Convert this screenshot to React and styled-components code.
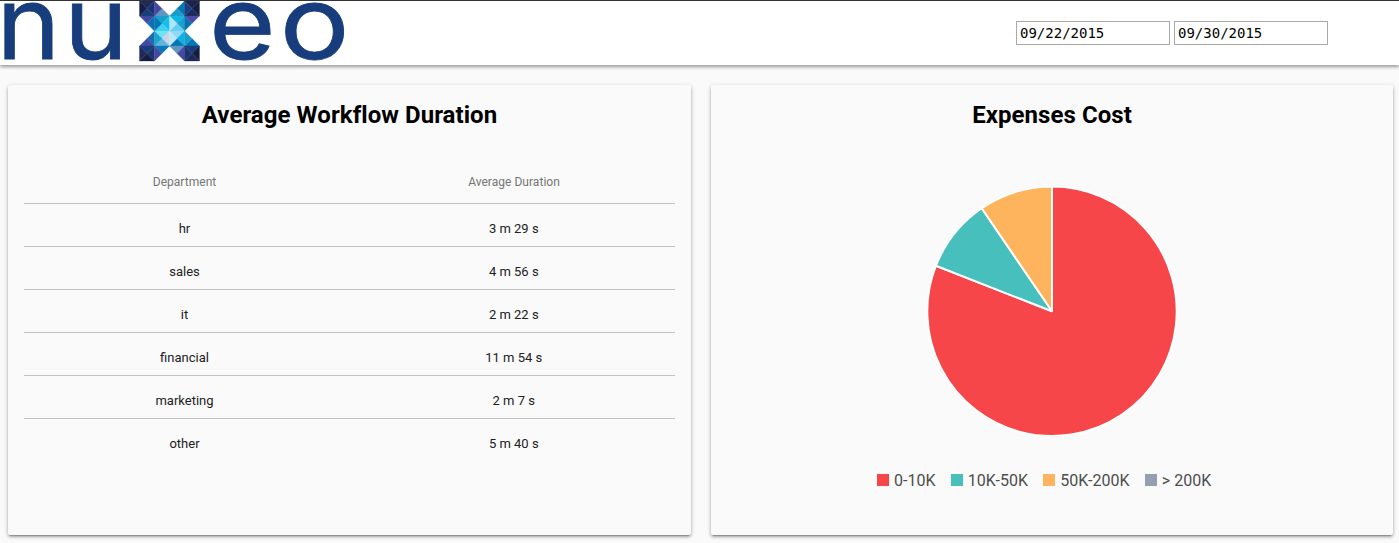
import React from "react";
import styled, { createGlobalStyle } from "styled-components";

const GlobalStyle = createGlobalStyle`
  * { box-sizing: border-box; }
  html, body { height: 100%; overflow: hidden; }
  body { margin: 0; background: #fafafa; font-family: Roboto, "Liberation Sans", sans-serif; color: #000; }
`;

const Page = styled.div`
  height: 543px;
  display: flex;
  flex-direction: column;
`;

const Header = styled.header`
  height: 65px;
  flex: none;
  display: flex;
  justify-content: space-between;
  background: #fff;
  border-top: 1px solid #333;
  box-shadow: 0 2px 3px rgba(0, 0, 0, 0.28), 0 1px 5px rgba(0, 0, 0, 0.18);
`;

const LogoSvg = styled.svg`
  display: block;
  width: 350px;
  height: 64px;
  overflow: visible;
  font-family: Inter, sans-serif;
  font-size: 103px;
  fill: #173d7c;
`;

const Dates = styled.div`
  display: flex;
  gap: 4px;
  padding: 20px 71px 0 0;
`;

const DateField = styled.input`
  width: 154px;
  height: 24px;
  padding: 1px 3px;
  border: 1px solid #a9a9a9;
  border-radius: 0;
  background: #fff;
  color: #000;
  font: 14px "DejaVu Sans Mono", monospace;
`;

const Cards = styled.main`
  display: grid;
  grid-template-columns: 683px 682px;
  gap: 20px;
  padding: 20px 0 0 8px;
`;

const Card = styled.section`
  height: 450px;
  padding: 16px;
  border-radius: 2px;
  background: #fafafa;
  display: flex;
  flex-direction: column;
  box-shadow: 0 2px 3px rgba(0, 0, 0, 0.24), 0 1px 5px rgba(0, 0, 0, 0.16), 0 3px 1px -2px rgba(0, 0, 0, 0.2);
`;

const Title = styled.h2`
  margin: 0;
  font-size: 24px;
  font-weight: 700;
  line-height: 28px;
  letter-spacing: 0.06px;
  text-align: center;
`;

const Table = styled.table`
  width: 100%;
  margin-top: 31px;
  border-collapse: collapse;
  table-layout: fixed;
  text-align: center;
`;

const HeadCell = styled.th`
  height: 43px;
  padding: 2px 0 0;
  font-size: 12px;
  font-weight: 400;
  letter-spacing: 0.03px;
  color: #757575;
  &:first-child { width: 321px; }
  &:last-child { padding-left: 8px; }
`;

const Row = styled.tr`
  border-top: 1px solid #c2c2c2;
`;

const Cell = styled.td`
  height: 43px;
  padding: 7px 0 0;
  font-size: 13px;
  color: #212121;
  &:last-child { padding-left: 7.5px; }
`;

const Pie = styled.svg`
  display: block;
  width: 250px;
  height: 250px;
  margin: 57px auto 0;
  stroke: #fff;
  stroke-width: 2;
  stroke-linejoin: bevel;
`;

const Legend = styled.div`
  display: flex;
  justify-content: center;
  gap: 15px;
  margin: 35px 16px 0 0;
`;

const LegendItem = styled.div`
  display: flex;
  align-items: center;
  gap: 5.3px;
  font-size: 16px;
  line-height: 20px;
  letter-spacing: 0.03px;
  color: #4d4d4d;
  &::before {
    content: "";
    width: 12px;
    height: 12px;
    margin-bottom: 2px;
    background: ${(p) => p.$color};
  }
`;

const durations = [
  ["hr", "3 m 29 s"],
  ["sales", "4 m 56 s"],
  ["it", "2 m 22 s"],
  ["financial", "11 m 54 s"],
  ["marketing", "2 m 7 s"],
  ["other", "5 m 40 s"],
];

const costs = [
  { label: "0-10K", color: "#f7464a", count: 17 },
  { label: "10K-50K", color: "#46bfbd", count: 2 },
  { label: "50K-200K", color: "#fdb45c", count: 2 },
  { label: "> 200K", color: "#949fb1", count: 0 },
];

const total = costs.reduce((sum, c) => sum + c.count, 0);

function slices() {
  let from = 0;
  const point = (n) => {
    const a = (n / total) * 2 * Math.PI;
    return `${125 + 124.7 * Math.sin(a)} ${125.3 - 124.7 * Math.cos(a)}`;
  };
  return costs.filter((c) => c.count).map((c) => {
    const to = from + c.count;
    const large = c.count / total > 0.5 ? 1 : 0;
    const d = `M125 125.3L${point(from)}A124.7 124.7 0 ${large} 1 ${point(to)}Z`;
    from = to;
    return <path key={c.label} d={d} fill={c.color} />;
  });
}

// Mosaic cells: column, row, then the top, right, bottom and left facets.
const mosaic = [
  [0, 0, "#1f2857", "#1b3270", "#173d7c", "#141d45"],
  [1, 0, null, null, "#5f97c0", "#4548a0"],
  [2, 0, null, "#0476b0", "#1a9cc8", null],
  [3, 0, "#1a2350", "#141d42", "#1f2a5c", "#163e80"],
  [0, 1, "#4548a0", "#0a70b0", null, null],
  [1, 1, "#1a9fc9", "#0fc0f2", "#3fd0f0", "#0478b5"],
  [2, 1, "#10b8e8", "#1aa0cc", "#62cdf5", "#b0e4f8"],
  [3, 1, "#4a4ba5", null, null, "#0a70b0"],
  [0, 2, null, "#1a6cab", "#4548a0", null],
  [1, 2, "#70e4f2", "#cfd0ec", "#60b5dd", "#1aa5cf"],
  [2, 2, "#90d8f6", "#0fb0e6", "#0478b5", "#b8e8fc"],
  [3, 2, null, null, "#0476b5", "#1a9cc8"],
  [0, 3, "#173d7c", "#1b3270", "#141d42", "#1f2857"],
  [1, 3, "#0a78b5", null, null, "#4548a0"],
  [2, 3, "#5f97c0", "#4548a0", null, null],
  [3, 3, "#173d7c", "#141d42", "#1f2857", "#1b3270"],
];

function Facets({ x, y, fills }) {
  const corners = [[x, y], [x + 15, y], [x + 15, y + 15], [x, y + 15]];
  return fills.map((fill, i) => fill && (
    <polygon
      key={i}
      fill={fill}
      stroke={fill}
      strokeWidth="0.3"
      points={`${corners[i]} ${corners[(i + 1) % 4]} ${x + 7.5},${y + 7.5}`}
    />
  ));
}

function Logo() {
  return (
    <LogoSvg viewBox="0 1 350 64" aria-label="nuxeo">
      <g stroke="#173d7c" strokeWidth="0.8">
        <text transform="translate(-3.6 58.6) scale(1.05 0.985)">n</text>
        <text transform="translate(64 58.6) scale(1.05 0.985)">u</text>
        <text transform="translate(208.9 58.6) scale(1.11 0.985)">e</text>
        <text transform="translate(279.8 58.6) scale(1.13 0.985)">o</text>
      </g>
      {mosaic.map(([col, row, ...fills]) => (
        <Facets key={`${col}-${row}`} x={139.5 + col * 15} y={1 + row * 15} fills={fills} />
      ))}
    </LogoSvg>
  );
}

export default function App() {
  return (
    <Page>
      <GlobalStyle />
      <Header>
        <Logo />
        <Dates>
          <DateField defaultValue="09/22/2015" />
          <DateField defaultValue="09/30/2015" />
        </Dates>
      </Header>
      <Cards>
        <Card>
          <Title>Average Workflow Duration</Title>
          <Table>
            <thead>
              <tr>
                <HeadCell>Department</HeadCell>
                <HeadCell>Average Duration</HeadCell>
              </tr>
            </thead>
            <tbody>
              {durations.map(([name, time]) => (
                <Row key={name}>
                  <Cell>{name}</Cell>
                  <Cell>{time}</Cell>
                </Row>
              ))}
            </tbody>
          </Table>
        </Card>
        <Card>
          <Title>Expenses Cost</Title>
          <Pie viewBox="0 0 250 250">{slices()}</Pie>
          <Legend>
            {costs.map((c) => (
              <LegendItem key={c.label} $color={c.color}>{c.label}</LegendItem>
            ))}
          </Legend>
        </Card>
      </Cards>
    </Page>
  );
}
